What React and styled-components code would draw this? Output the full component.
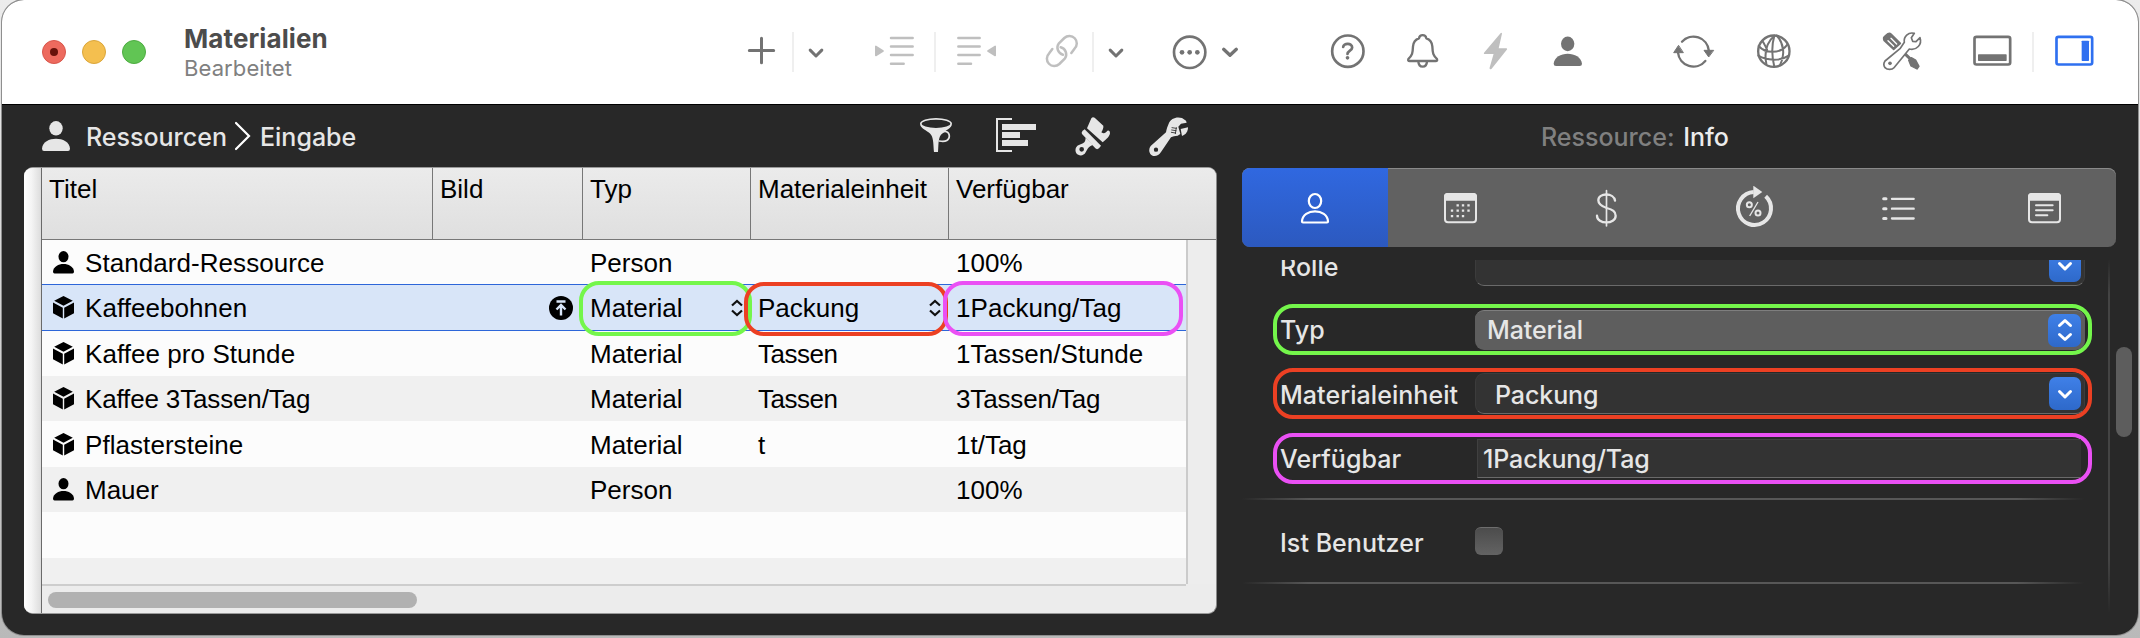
import React from "react";
import styled, { createGlobalStyle, css } from "styled-components";

const GlobalStyle = createGlobalStyle`
  * { box-sizing: border-box; }
  body {
    margin: 0;
    height: 638px;
    overflow: hidden;
    background: linear-gradient(#ececec, #b9b9b9);
  }
`;

const ui = `Inter, "Liberation Sans", sans-serif`;
const grid = `"Liberation Sans", Arial, sans-serif`;

const LIME = "#74f64b";
const RED = "#ec4023";
const PINK = "#ea50f4";

const Window = styled.div`
  width: 2136px;
  height: 635px;
  margin: 0 2px;
  display: flex;
  flex-direction: column;
  border-radius: 22px;
  overflow: hidden;
  background: #282828;
  font-family: ${ui};
  box-shadow: 0 0 0 1px #8f8f8f;
`;

/* ---------- title bar ---------- */

const TitleBar = styled.header`
  height: 105px;
  flex: none;
  display: flex;
  align-items: center;
  padding-left: 40px;
  background: #fff;
  border-bottom: 1px solid #000;
`;

const Lights = styled.div`
  display: flex;
  gap: 16px;
`;

const Light = styled.span`
  width: 24px;
  height: 24px;
  border-radius: 50%;
  display: grid;
  place-items: center;
  background: ${(p) => p.$fill};
  border: 1px solid ${(p) => p.$rim};
`;

const EditedDot = styled.span`
  width: 8px;
  height: 8px;
  border-radius: 50%;
  background: #67110a;
`;

const DocTitle = styled.div`
  width: 561px;
  margin-left: 38px;
  padding-top: 2px;
  display: flex;
  flex-direction: column;
`;

const DocName = styled.span`
  font-size: 26px;
  line-height: 30px;
  font-weight: 700;
  letter-spacing: 0.1px;
  color: #4c4c4c;
`;

const DocState = styled.span`
  font-size: 22px;
  line-height: 28px;
  letter-spacing: 0.1px;
  color: #808080;
`;

const Tool = styled.span`
  display: flex;
  flex: none;
  margin-left: ${(p) => p.$gap}px;
  color: ${(p) => p.$color || "#737373"};
`;

const ToolDivider = styled.span`
  flex: none;
  width: 2px;
  height: 40px;
  margin-left: ${(p) => p.$gap}px;
  background: #efefef;
`;

/* Icons are drawn on a grid of three units per pixel. */
const Icon = ({ x, y, w, h, children, ...rest }) => (
  <svg width={w} height={h} viewBox={`${x} ${y} ${w * 3} ${h * 3}`} fill="none" stroke="currentColor" strokeLinecap="round" strokeLinejoin="round" strokeWidth="8" {...rest}>
    {children}
  </svg>
);

const PlusIcon = () => (
  <Icon x={30} y={30} w={34} h={44} strokeWidth="9">
    <path d="M43 91.500H116M79.500 55V128" />
  </Icon>
);
const ChevronIcon = () => (
  <Icon x={210} y={30} w={22} h={44} strokeWidth="9">
    <path d="M225.500 90.500L243 108L260.500 90.500" />
  </Icon>
);
const WideChevronIcon = () => (
  <Icon x={1449} y={30} w={24} h={44} strokeWidth="10">
    <path d="M1466 88L1485 106L1504 88" />
  </Icon>
);
const IndentIcon = () => (
  <Icon x={405} y={30} w={50} h={44} strokeWidth="7.500">
    <path d="M468 54H533M468 79.500H533M468 105H533M468 131H506" />
    <path fill="currentColor" strokeWidth="5" d="M422.500 79.500V106.500L444 93Z" />
  </Icon>
);
const OutdentIcon = () => (
  <Icon x={651} y={30} w={50} h={44} strokeWidth="7.500">
    <path d="M670 54H734M670 79.500H734M670 105H734M670 131H708" />
    <path fill="currentColor" strokeWidth="5" d="M780.500 79.500V106.500L759 93Z" />
  </Icon>
);
const LinkIcon = () => (
  <Icon x={921} y={30} w={40} h={44} strokeWidth="7.500">
    <path d="M1009 99L1018.500 86A21.600 21.600 0 1 0 988 54L971 71A21.600 21.600 0 0 0 984 104" />
    <path d="M952 87L942.500 100A21.600 21.600 0 1 0 973 132L990 115A21.600 21.600 0 0 0 977 82" />
  </Icon>
);
const MoreIcon = () => (
  <Icon x={1305} y={30} w={40} h={44}>
    <circle cx="1364" cy="97" r="47" />
    <g fill="currentColor" stroke="none">
      <circle cx="1341" cy="97" r="7" />
      <circle cx="1364" cy="97" r="7" />
      <circle cx="1387" cy="97" r="7" />
    </g>
  </Icon>
);
const HelpIcon = () => (
  <Icon x={54} y={30} w={40} h={44}>
    <circle cx="113.500" cy="93.500" r="47" />
    <path d="M99.500 81C100 68 127 68 126.500 83C126 92 113 92 112.500 102" />
    <circle cx="112.500" cy="113.500" r="5.500" fill="currentColor" stroke="none" />
  </Icon>
);
const BellIcon = () => (
  <Icon x={276} y={30} w={40} h={44} strokeWidth="7">
    <path d="M338 45.500C331 45.500 328 49 327 55C315 59 310 67 309 79C308 100 307 105 295 117Q293 123 299 123H377Q383 123 381 117C369 105 368 100 367 79C366 67 361 59 349 55C348 49 345 45.500 338 45.500Z" />
    <path d="M325 124C326 145 350 145 351 124" />
  </Icon>
);
const BoltIcon = () => (
  <Icon x={498} y={30} w={40} h={44} strokeWidth="5">
    <path fill="currentColor" d="M573.500 41L563 87H589L543 145H541L554 99.500H524Z" />
  </Icon>
);
const PersonIcon = () => (
  <Icon x={714} y={30} w={40} h={44}>
    <g fill="currentColor" stroke="none">
      <ellipse cx="773" cy="71.500" rx="20" ry="22" />
      <path d="M738 138Q731 138 731 131C734 91 812 91 816 131Q816 138 809 138Z" />
    </g>
  </Icon>
);
const SyncIcon = () => (
  <Icon x={1083} y={30} w={46} h={44} strokeWidth="7">
    <path d="M1116 65A46.500 46.500 0 0 1 1196.500 92M1186 123A46.500 46.500 0 0 1 1104 98" />
    <g fill="currentColor" strokeWidth="3">
      <path d="M1105 77L1091 98H1119Z" />
      <path d="M1195.500 110L1182 91H1210Z" />
    </g>
  </Icon>
);
const GlobeIcon = () => (
  <Icon x={1332} y={30} w={40} h={44} strokeWidth="7">
    <circle cx="1391.500" cy="93.500" r="47" />
    <path strokeWidth="6" d="M1393 47C1371 66 1361 90 1369 131M1393 47C1385 75 1385 108 1393 140M1400 47C1420 66 1427 105 1410 136M1346 78C1365 100 1410 104 1432 74M1345 107C1370 122 1412 124 1436 107M1357 63C1363 70 1366 80 1371 88" />
  </Icon>
);
const ToolsIcon = () => (
  <Icon x={60} y={90} w={44} h={44} strokeWidth="5">
    <path fill="currentColor" d="M71 116Q70 112 74 109L84 101Q89 98 93 102L121 130L101 148L73 122Q71 119 71 116Z" />
    <path stroke="#fff" strokeWidth="4" d="M84 122L101 139M93 115L110 132" />
    <path strokeWidth="9" d="M131 158L150 176" />
    <path fill="currentColor" strokeWidth="4" d="M146 181L154 173L167 180L177 199L171 207L153 198Z" />
    <path fill="#fff" strokeWidth="5" d="M75 183L120 146L133 127C130 110 145 95 163 100L154 113L158 124L168 125L180 113C187 133 170 152 148 147L102 203C96 210 82 210 75 203Q68 193 75 183Z" />
    <circle cx="90" cy="190" r="5.500" fill="currentColor" stroke="none" />
  </Icon>
);
const BottomPaneIcon = () => (
  <Icon x={330} y={90} w={44} h={44} strokeWidth="8">
    <rect x="343.500" y="110.500" width="107" height="83" rx="6" />
    <rect x="354" y="163" width="86" height="20" rx="2" fill="currentColor" stroke="none" />
  </Icon>
);
const RightPaneIcon = () => (
  <Icon x={576} y={90} w={44} h={44} strokeWidth="8">
    <rect x="589.500" y="110.500" width="107" height="83" rx="6" />
    <rect x="665" y="122" width="22" height="61" rx="2" fill="currentColor" stroke="none" />
  </Icon>
);

const DIM = "#bfbfbf";
const TOOLS = [
  { icon: PlusIcon, gap: 0 },
  { gap: 13 },
  { icon: ChevronIcon, gap: 11 },
  { icon: IndentIcon, gap: 43, color: DIM },
  { gap: 14 },
  { icon: OutdentIcon, gap: 16, color: DIM },
  { icon: LinkIcon, gap: 40, color: DIM },
  { gap: 10 },
  { icon: ChevronIcon, gap: 11 },
  { icon: MoreIcon, gap: 43 },
  { icon: WideChevronIcon, gap: 8 },
  { icon: HelpIcon, gap: 86 },
  { icon: BellIcon, gap: 34 },
  { icon: BoltIcon, gap: 34, color: DIM },
  { icon: PersonIcon, gap: 32 },
  { icon: SyncIcon, gap: 83 },
  { icon: GlobeIcon, gap: 37 },
  { icon: ToolsIcon, gap: 86 },
  { icon: BottomPaneIcon, gap: 46 },
  { gap: 18 },
  { icon: RightPaneIcon, gap: 18, color: "#2f70f0" },
];

/* ---------- main area ---------- */

const Main = styled.div`
  flex: 1;
  min-height: 0;
  display: flex;
`;

const ListPane = styled.section`
  width: 1193px;
  flex: none;
  margin-left: 22px;
  display: flex;
  flex-direction: column;
`;

const PaneBar = styled.div`
  height: 62px;
  flex: none;
  display: flex;
  align-items: center;
  padding-left: 18px;
  color: #e6e6e6;
`;

const Crumb = styled.span`
  width: ${(p) => p.$w}px;
  flex: none;
  margin-left: ${(p) => p.$gap}px;
  padding-top: 2px;
  font-size: 25px;
  font-weight: 500;
  line-height: 30px;
  white-space: nowrap;
`;

const PaneTool = styled.span`
  display: flex;
  flex: none;
  margin-left: ${(p) => p.$gap}px;
`;

const CrumbPerson = () => (
  <svg width="28" height="30" viewBox="0 0 28 30" fill="currentColor">
    <ellipse cx="14" cy="7.300" rx="6.700" ry="7.300" />
    <path d="M2 30Q0 30 0 27.500C1 14.500 27 14.500 28 27.500Q28 30 26 30Z" />
  </svg>
);
const CrumbChevron = () => (
  <svg width="18" height="30" viewBox="0 0 18 30" fill="none" stroke="#fff" strokeWidth="2.200" strokeLinecap="round">
    <path d="M2 2L15 15L2 28" />
  </svg>
);
const FunnelIcon = () => (
  <Icon x={54} y={45} w={36} h={42} strokeWidth="5">
    <ellipse cx="108" cy="71.500" rx="45.500" ry="15" />
    <path d="M124 100C134 88 148 96 148 108C148 120 138 127 118 123" />
    <path fill="currentColor" stroke="none" d="M60 74C66 90 87 92 94 106C101 118 100 138 102 156H114C116 138 114 118 122 106C129 92 150 90 156 74C140 91 76 91 60 74Z" />
  </Icon>
);
const OutlineIcon = () => (
  <Icon x={282} y={45} w={44} h={42}>
    <path strokeWidth="6" strokeLinecap="butt" strokeLinejoin="miter" d="M336 57H291V153H336" />
    <path fill="currentColor" stroke="none" d="M306 72H408V90H306ZM306 96H360V114H306ZM306 120H384V138H306Z" />
  </Icon>
);
const BrushIcon = () => (
  <Icon x={519} y={45} w={40} h={42}>
    <g fill="currentColor" stroke="none">
      <path fillRule="evenodd" d="M557 113L579 135C573 137 568 139 563 146L557 157C551 169 536 169 529 160C524 151 527 140 535 136L549 130C556 126 556 121 557 113ZM545 141A7 7 0 1 0 545 155A7 7 0 1 0 545 141Z" />
      <path d="M546 102Q543 97 548 92L554 88L603 137L597 145Q591 150 586 145Z" />
      <path d="M561 85L574 55Q578 49 584 53L610 77C611 84 608 90 604 97C612 102 617 99 622 92Q630 89 630 99C630 107 621 117 608 127Z" />
    </g>
  </Icon>
);
const WrenchIcon = () => (
  <Icon x={741} y={45} w={44} h={42}>
    <g fill="currentColor" stroke="none">
      <path fillRule="evenodd" d="M752 138L798 97C799 88 803 78 806 71C812 55 830 49 846 54L858 62L860 68L843 71L835 80L841 102L833 107C825 108 818 109 813 112L783 156C776 168 761 172 753 164C746 156 746 146 752 138ZM768 142.500A6.500 6.500 0 1 0 768 155.500A6.500 6.500 0 1 0 768 142.500Z" />
      <path d="M842 87L864 82C864 94 858 104 846 108Z" />
    </g>
    <path stroke="#282828" strokeWidth="2.500" d="M816 83L829 85M815 90L828 92M814 97L827 99M829 83L826 101" />
  </Icon>
);

/* ---------- table ---------- */

const TableFrame = styled.div`
  flex: none;
  height: 447px;
  display: flex;
  border-radius: 9px;
  overflow: hidden;
  background: #ececec;
  border-top: 1px solid #9a9a9a;
  border-right: 1px solid #8a8a8a;
  border-bottom: 1px solid #9a9a9a;
`;

const Gutter = styled.div`
  width: 18px;
  flex: none;
  background: linear-gradient(90deg, #fff, #f4f4f4 45%, #dcdcdc);
  border-right: 1px solid #6a6a6a;
`;

const TableBody = styled.div`
  flex: 1;
  display: flex;
  flex-direction: column;
  font-family: ${grid};
  font-size: 26px;
  color: #000;
`;

const COLS = "391px 150px 168px 198px";

const HeadRow = styled.div`
  height: 72px;
  flex: none;
  display: grid;
  grid-template-columns: ${COLS} 1fr;
  background: linear-gradient(#ebebeb, #dfdfdf);
  border-bottom: 1px solid #777;
`;

const HeadCell = styled.div`
  padding: 6px 0 0 7px;
  line-height: 30px;
  border-right: ${(p) => (p.$last ? "none" : "1px solid #777")};
`;

const Scroller = styled.div`
  flex: 1;
  display: flex;
`;

const Rows = styled.div`
  width: 1144px;
  height: 344px;
  flex: none;
  overflow: hidden;
  display: grid;
  grid-template-rows: 44px 47px 45px 45px 46px 45px 46px 26px;
`;

const Row = styled.div`
  display: grid;
  grid-template-columns: ${COLS} 1fr;
  align-items: center;
  background: ${(p) => (p.$odd ? "#f0f0f0" : "#fcfcfc")};
  ${(p) =>
    p.$selected &&
    css`
      background: #d8e5f8;
      border: solid #2d66d9;
      border-width: 1px 0;
    `}
`;

const Cell = styled.div`
  position: relative;
  height: 30px;
  line-height: 30px;
  display: flex;
  align-items: center;
  padding-left: ${(p) => (p.$first ? 11 : 7)}px;
  white-space: nowrap;
`;

const CellText = styled.span`
  margin-left: ${(p) => p.$gap || 0}px;
  padding-top: 1px;
  letter-spacing: ${(p) => p.$ls || 0}px;
`;

const Push = styled.span`
  display: flex;
  margin-left: auto;
  margin-right: ${(p) => p.$right}px;
`;

const CellRing = styled.span`
  position: absolute;
  left: ${(p) => p.$left}px;
  top: ${(p) => p.$top}px;
  width: ${(p) => p.$w}px;
  bottom: -13px;
  border: 4px solid ${(p) => p.$color};
  border-radius: 20px;
  z-index: 1;
`;

const VTrack = styled.div`
  flex: 1;
  height: 344px;
  border-left: 2px solid #cbcbcb;
  background: #ededed;
`;

const HTrack = styled.div`
  height: 29px;
  flex: none;
  width: 1144px;
  border-top: 2px solid #cdcdcd;
  padding: 6px 0 0 6px;
`;

const HThumb = styled.div`
  width: 369px;
  height: 16px;
  border-radius: 8px;
  background: #b1b1b1;
`;

const RowPerson = () => (
  <svg width="21" height="23" viewBox="0 0 21 23" fill="#000">
    <ellipse cx="10.500" cy="5.700" rx="5" ry="5.600" />
    <path d="M1.500 22.500Q0 22.500 0 20.500C1 10.500 20 10.500 21 20.500Q21 22.500 19.500 22.500Z" />
  </svg>
);
const CubeIcon = () => (
  <svg width="21" height="23" viewBox="0 0 21 23" fill="#000">
    <path d="M10.500 0L19.800 4.700L10.500 9.800L1.200 4.700ZM0 6.500L9.800 11.700V22.500L0 17.300ZM21 6.500L11.200 11.700V22.500L21 17.300Z" />
  </svg>
);
const UploadIcon = () => (
  <svg width="24" height="24" viewBox="0 0 24 24" fill="none" stroke="#d8e5f8" strokeWidth="2.400">
    <circle cx="12" cy="12" r="12" fill="#000" stroke="none" />
    <path d="M7.500 5.500H16.500M12 19.500V10M7.500 13.500L12 9L16.500 13.500" />
  </svg>
);
const StepperGlyph = () => (
  <svg width="12" height="18" viewBox="0 0 12 18" fill="none" stroke="#111" strokeWidth="2.200">
    <path d="M1 6.500L6 2L11 6.500M1 11.500L6 16L11 11.500" />
  </svg>
);

const DATA = [
  { person: true, name: "Standard-Ressource", type: "Person", unit: "", avail: "100%" },
  { name: "Kaffeebohnen", type: "Material", unit: "Packung", avail: "1Packung/Tag", selected: true },
  { name: "Kaffee pro Stunde", type: "Material", unit: "Tassen", avail: "1Tassen/Stunde" },
  { name: "Kaffee 3Tassen/Tag", type: "Material", unit: "Tassen", avail: "3Tassen/Tag", odd: true },
  { name: "Pflastersteine", type: "Material", unit: "t", avail: "1t/Tag" },
  { person: true, name: "Mauer", type: "Person", unit: "", avail: "100%", odd: true },
];

const tight = (text) => {
  if (text === "Tassen") return -0.5;
  if (text.includes("Tassen/Tag")) return -0.15;
  return text.length > 10 ? 0.06 : 0;
};

const ResourceRow = ({ r }) => (
  <Row $odd={r.odd} $selected={r.selected}>
    <Cell $first>
      {r.person ? <RowPerson /> : <CubeIcon />}
      <CellText $gap={11} $ls={tight(r.name)}>{r.name}</CellText>
    </Cell>
    <Cell>
      {r.selected && (
        <Push $right={10}>
          <UploadIcon />
        </Push>
      )}
    </Cell>
    <Cell>
      <CellText>{r.type}</CellText>
      {r.selected && (
        <>
          <Push $right={8}>
            <StepperGlyph />
          </Push>
          <CellRing $color={LIME} $left={-4} $top={-12} $w={173} />
        </>
      )}
    </Cell>
    <Cell>
      <CellText $ls={tight(r.unit)}>{r.unit}</CellText>
      {r.selected && (
        <>
          <Push $right={8}>
            <StepperGlyph />
          </Push>
          <CellRing $color={RED} $left={-7} $top={-11} $w={204} />
        </>
      )}
    </Cell>
    <Cell>
      <CellText $ls={tight(r.avail)}>{r.avail}</CellText>
      {r.selected && <CellRing $color={PINK} $left={-6} $top={-12} $w={240} />}
    </Cell>
  </Row>
);

/* ---------- inspector ---------- */

const Inspector = styled.section`
  flex: 1;
  padding-left: 25px;
  display: flex;
  flex-direction: column;
`;

const InspectorTitle = styled.div`
  height: 62px;
  flex: none;
  display: flex;
  align-items: center;
  padding: 2px 0 0 299px;
  font-size: 25px;
  font-weight: 500;
  color: #808080;
  white-space: pre;
`;

const Strong = styled.span`
  margin-left: 2px;
  color: #ececec;
`;

const Tabs = styled.div`
  width: 874px;
  height: 79px;
  flex: none;
  margin-top: 1px;
  display: grid;
  grid-template-columns: repeat(6, 1fr);
  border-radius: 8px;
  overflow: hidden;
  background: #616161;
  box-shadow: inset 0 1px 0 #8a8a8a;
`;

const Tab = styled.div`
  display: flex;
  align-items: center;
  justify-content: center;
  padding-left: ${(p) => p.$nudge || 0}px;
  color: ${(p) => (p.$active ? "#fff" : "#e6e6e6")};
  background: ${(p) => (p.$active ? "linear-gradient(#3068e0, #2c59bf)" : "none")};
`;

const InfoTab = () => (
  <svg width="30" height="44" viewBox="0 0 30 44" fill="none" stroke="currentColor" strokeWidth="2.200" strokeLinejoin="round">
    <ellipse cx="15" cy="15" rx="6.200" ry="7" />
    <path d="M2 35.500C2.500 22 27.500 22 28 35.500Q28 36.500 27 36.500H3Q2 36.500 2 35.500Z" />
  </svg>
);
const CalendarTab = () => (
  <Icon x={66} y={60} w={37} h={44} strokeWidth="6">
    <rect x="75" y="84" width="93" height="84.500" rx="9" />
    <path fill="currentColor" d="M75 101V92Q75 84 83 84H160Q168 84 168 92V101Z" />
    <path strokeWidth="7" strokeLinecap="square" d="M113 118h.1M129 118h.1M145.500 118h.1M96 134h.1M113 134h.1M129 134h.1M145.500 134h.1M96 150.500h.1M113 150.500h.1M129 150.500h.1" />
  </Icon>
);
const CostTab = () => (
  <Icon x={519} y={60} w={27} h={44} strokeWidth="7">
    <path d="M585 104C583 80 535 79 535 103C535 116 545 121 560 126C578 131 587 136 587 149C587 176 531 176 531 149" />
    <path strokeWidth="5" d="M559.500 74V180" />
  </Icon>
);
const WorkloadTab = () => (
  <Icon x={939} y={60} w={43} h={44} strokeWidth="12" strokeLinecap="butt">
    <path d="M1040 91A49.500 49.500 0 1 1 1004 78" />
    <path fill="currentColor" stroke="none" d="M1003 59V97L1030 78Z" />
    <g strokeWidth="6">
      <circle cx="991" cy="116" r="7.500" />
      <circle cx="1017" cy="141" r="7.500" />
      <path strokeWidth="4" d="M1017 108L992 150" />
    </g>
  </Icon>
);
const ListTab = () => (
  <Icon x={1377} y={60} w={39} h={44} strokeWidth="8">
    <path strokeWidth="9" d="M1391 98.500H1398M1391 128H1398M1391 157.500H1398" />
    <path d="M1416 98.500H1481M1416 128H1481M1416 157.500H1481" strokeWidth="7" />
  </Icon>
);
const NoteTab = () => (
  <Icon x={66} y={60} w={37} h={44} strokeWidth="6">
    <rect x="75" y="84" width="93" height="84.500" rx="9" />
    <path fill="currentColor" d="M75 101V92Q75 84 83 84H160Q168 84 168 92V101Z" />
    <path strokeWidth="6" d="M96 118H146M96 133H146M96 148H130" />
  </Icon>
);

const InspectorBody = styled.div`
  flex: 1;
  min-height: 0;
  margin-top: 13px;
  display: flex;
  overflow: hidden;
`;

const Form = styled.div`
  width: 850px;
  margin-top: -20px;
  flex: none;
`;

const Field = styled.div`
  width: 819px;
  height: 51px;
  margin: 0 0 ${(p) => p.$after || 13}px 31px;
  padding-left: 3px;
  display: flex;
  align-items: center;
  border: 4px solid ${(p) => p.$ring || "transparent"};
  border-radius: 20px;
  font-size: 25px;
  font-weight: 500;
  color: #e6e6e6;
`;

const FieldLabel = styled.label`
  width: 195px;
  flex: none;
  padding-top: ${(p) => p.$drop || 0}px;
  line-height: 30px;
  letter-spacing: 0.05px;
`;

const PopUp = styled.div`
  width: 610px;
  height: 40px;
  display: flex;
  align-items: center;
  padding: 0 4px 0 12px;
  border-radius: 9px;
  background: #5e5e5e;
  border-top: 1px solid #7e7e7e;
`;

const Combo = styled.div`
  width: 610px;
  height: 41px;
  display: flex;
  align-items: center;
  padding: 0 3px 0 19px;
  border-radius: 9px;
  background: #333;
  border: 1px solid #3c3c3c;
  border-bottom-color: #6a6a6a;
`;

const TextInput = styled.div`
  width: 604px;
  height: 39px;
  margin-left: 2px;
  display: flex;
  align-items: center;
  padding-left: 5px;
  background: #333;
  border: 1px solid #404040;
  border-right: none;
  border-bottom-color: #6a6a6a;
`;

const ValueText = styled.span`
  padding-top: ${(p) => p.$drop || 0}px;
  line-height: 30px;
  letter-spacing: -0.1px;
`;

const BlueKnob = styled.span`
  width: ${(p) => p.$w}px;
  height: 33px;
  margin-left: auto;
  display: grid;
  place-items: center;
  border-radius: 7px;
  background: linear-gradient(#3f80e8, #2e69ca);
`;

const DownGlyph = () => (
  <svg width="18" height="18" viewBox="0 0 18 18" fill="none" stroke="#fff" strokeWidth="3" strokeLinecap="round" strokeLinejoin="round">
    <path d="M3.500 6.500L9 12L14.500 6.500" />
  </svg>
);
const UpDownGlyph = () => (
  <svg width="18" height="26" viewBox="0 0 18 26" fill="none" stroke="#fff" strokeWidth="3" strokeLinecap="round" strokeLinejoin="round">
    <path d="M3.500 8.500L9 3.500L14.500 8.500M3.500 17.500L9 22.500L14.500 17.500" />
  </svg>
);

const Rule = styled.div`
  width: 842px;
  height: 2px;
  background: linear-gradient(90deg, rgba(87, 87, 87, 0), #575757 8%, #575757 92%, rgba(87, 87, 87, 0));
`;

const CheckRow = styled.div`
  height: 82px;
  display: flex;
  align-items: center;
  padding-left: 38px;
  font-size: 25px;
  font-weight: 500;
  color: #e6e6e6;
`;

const CheckBox = styled.span`
  width: 28px;
  height: 28px;
  border-radius: 6px;
  background: linear-gradient(#4c4c4c, #636363);
  border-top: 1px solid #6e6e6e;
`;

const InspectorTrack = styled.div`
  width: 25px;
  height: 352px;
  margin-left: 16px;
  padding: 87px 0 0 6px;
  border-left: 2px solid;
  border-image: linear-gradient(rgba(68, 68, 68, 0), #444 10%, #444 85%, rgba(68, 68, 68, 0)) 1;
`;

const InspectorThumb = styled.div`
  width: 16px;
  height: 90px;
  border-radius: 8px;
  background: #5d5d5d;
`;

export default function App() {
  return (
    <>
      <GlobalStyle />
      <Window>
        <TitleBar>
          <Lights>
            <Light $fill="#ed6a5e" $rim="#d8564b">
              <EditedDot />
            </Light>
            <Light $fill="#f4bf4f" $rim="#dba63a" />
            <Light $fill="#61c554" $rim="#4dac41" />
          </Lights>
          <DocTitle>
            <DocName>Materialien</DocName>
            <DocState>Bearbeitet</DocState>
          </DocTitle>
          {TOOLS.map(({ icon: Glyph, gap, color }, i) =>
            Glyph ? (
              <Tool key={i} $gap={gap} $color={color}>
                <Glyph />
              </Tool>
            ) : (
              <ToolDivider key={i} $gap={gap} />
            )
          )}
        </TitleBar>
        <Main>
          <ListPane>
            <PaneBar>
              <CrumbPerson />
              <Crumb $gap={16} $w={148}>Ressourcen</Crumb>
              <CrumbChevron />
              <Crumb $gap={8} $w={658}>Eingabe</Crumb>
              <PaneTool $gap={0}><FunnelIcon /></PaneTool>
              <PaneTool $gap={40}><OutlineIcon /></PaneTool>
              <PaneTool $gap={35}><BrushIcon /></PaneTool>
              <PaneTool $gap={34}><WrenchIcon /></PaneTool>
            </PaneBar>
            <TableFrame>
              <Gutter />
              <TableBody>
                <HeadRow>
                  <HeadCell>Titel</HeadCell>
                  <HeadCell>Bild</HeadCell>
                  <HeadCell>Typ</HeadCell>
                  <HeadCell>Materialeinheit</HeadCell>
                  <HeadCell $last>Verfügbar</HeadCell>
                </HeadRow>
                <Scroller>
                  <Rows>
                    {DATA.map((r) => (
                      <ResourceRow key={r.name} r={r} />
                    ))}
                    <Row />
                    <Row $odd />
                  </Rows>
                  <VTrack />
                </Scroller>
                <HTrack>
                  <HThumb />
                </HTrack>
              </TableBody>
            </TableFrame>
          </ListPane>
          <Inspector>
            <InspectorTitle>
              {"Ressource: "}
              <Strong>Info</Strong>
            </InspectorTitle>
            <Tabs>
              <Tab $active><InfoTab /></Tab>
              <Tab><CalendarTab /></Tab>
              <Tab><CostTab /></Tab>
              <Tab $nudge={4}><WorkloadTab /></Tab>
              <Tab $nudge={2}><ListTab /></Tab>
              <Tab $nudge={2}><NoteTab /></Tab>
            </Tabs>
            <InspectorBody>
              <Form>
                <Field>
                  <FieldLabel $drop={2}>Rolle</FieldLabel>
                  <Combo>
                    <BlueKnob $w={32}><DownGlyph /></BlueKnob>
                  </Combo>
                </Field>
                <Field $ring={LIME}>
                  <FieldLabel $drop={1}>Typ</FieldLabel>
                  <PopUp>
                    <ValueText>Material</ValueText>
                    <BlueKnob $w={33}><UpDownGlyph /></BlueKnob>
                  </PopUp>
                </Field>
                <Field $ring={RED} $after={14}>
                  <FieldLabel $drop={2}>Materialeinheit</FieldLabel>
                  <Combo>
                    <ValueText $drop={2}>Packung</ValueText>
                    <BlueKnob $w={32}><DownGlyph /></BlueKnob>
                  </Combo>
                </Field>
                <Field $ring={PINK} $after={14}>
                  <FieldLabel>Verfügbar</FieldLabel>
                  <TextInput>
                    <ValueText>1Packung/Tag</ValueText>
                  </TextInput>
                </Field>
                <Rule />
                <CheckRow>
                  <FieldLabel $drop={3}>Ist Benutzer</FieldLabel>
                  <CheckBox />
                </CheckRow>
                <Rule />
              </Form>
              <InspectorTrack>
                <InspectorThumb />
              </InspectorTrack>
            </InspectorBody>
          </Inspector>
        </Main>
      </Window>
    </>
  );
}
